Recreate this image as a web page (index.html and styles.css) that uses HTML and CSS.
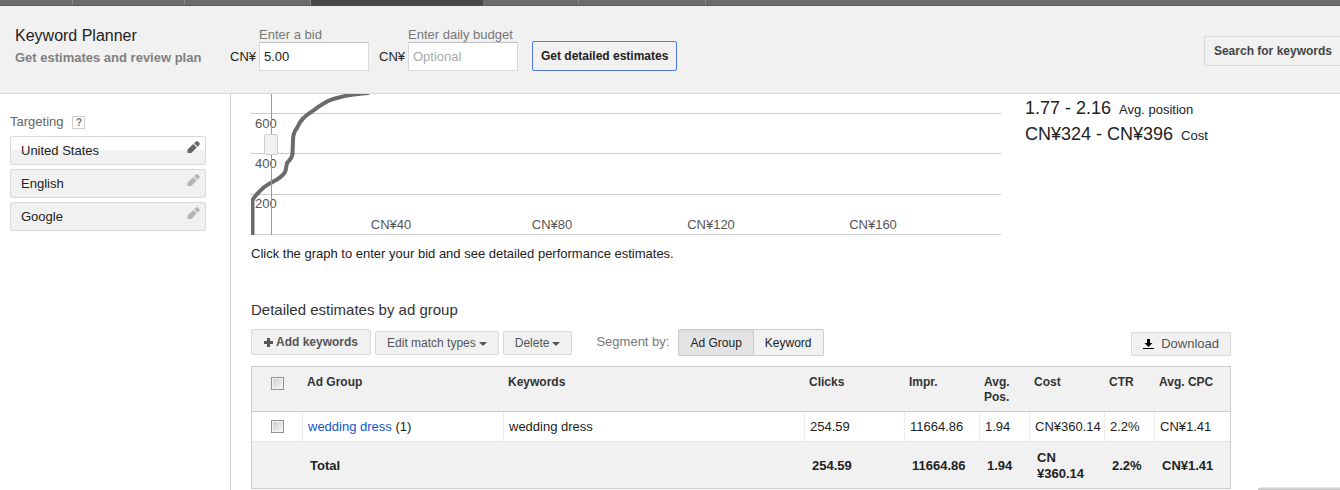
FILE: index.html
```html
<!DOCTYPE html>
<html lang="en">
<head>
<meta charset="utf-8">
<title>Keyword Planner</title>
<link rel="stylesheet" href="styles.css">
</head>
<body>
<svg class="defs" aria-hidden="true">
  <symbol id="pencil" viewBox="0 0 13 13"><path d="M0.500 8.500 L6.300 3 L9.800 6.500 L4.300 12 H0.500 Z M7.200 2.200 L9.200 0.200 H10.700 L12.700 2.200 V3.500 L10.700 5.700 Z"/></symbol>
</svg>
<nav class="tabs" aria-label="Sections">
  <span class="tab tab-first"></span><span class="tab tab-second"></span><span class="tab tab-third"></span><span class="tab tab-active"></span><span class="tab tab-fifth"></span><span class="tab tab-sixth"></span>
</nav>
<header class="header">
  <div class="title">
    <h1>Keyword Planner</h1>
    <p>Get estimates and review plan</p>
  </div>
  <form class="bid-form">
    <div class="field">
      <label for="bid">Enter a bid</label>
      <span class="currency">CN¥</span>
      <input id="bid" type="text" value="5.00">
    </div>
    <div class="field">
      <label for="budget">Enter daily budget</label>
      <span class="currency">CN¥</span>
      <input id="budget" type="text" placeholder="Optional">
    </div>
    <button class="primary" type="button">Get detailed estimates</button>
  </form>
  <button class="search" type="button">Search for keywords</button>
</header>
<div class="page">
  <aside class="sidebar">
    <div class="targeting"><h2>Targeting</h2><button class="help" type="button" aria-label="Help on targeting">?</button></div>
    <button class="target target-hover" type="button">United States<svg class="pencil"><use href="#pencil"/></svg></button>
    <button class="target" type="button">English<svg class="pencil"><use href="#pencil"/></svg></button>
    <button class="target" type="button">Google<svg class="pencil"><use href="#pencil"/></svg></button>
  </aside>
  <main class="main">
    <section class="overview">
      <svg class="chart" viewBox="0 0 750 141" role="img" aria-label="Clicks by bid">
        <g class="grid"><path d="M0 19.5H750M0 59.5H750M0 100.5H750M0 140.5H750"/></g>
        <g class="axis">
          <text x="4" y="34">600</text><text x="4" y="74">400</text><text x="4" y="114">200</text>
          <g text-anchor="middle"><text x="140" y="135">CN¥40</text><text x="301" y="135">CN¥80</text><text x="460" y="135">CN¥120</text><text x="622" y="135">CN¥160</text></g>
        </g>
        <path class="curve" d="M1.5 141V107Q2 104 7 99Q12 93 17 90.5L26 85.5Q33 81 34.500 77L36 69Q41 64 41.500 60L42 46Q42 39 46 34Q50 24 61 17.500Q68 12 76 7.500Q90 1 118 -1"/>
        <path class="marker" d="M20.500 0V141"/>
        <rect class="handle" x="13.500" y="40.500" width="13" height="20" rx="1.500"/>
      </svg>
      <dl class="stats">
        <div><dd>1.77 - 2.16</dd><dt>Avg. position</dt></div>
        <div><dd>CN¥324 - CN¥396</dd><dt>Cost</dt></div>
      </dl>
    </section>
    <p class="hint">Click the graph to enter your bid and see detailed performance estimates.</p>
    <h2 class="section-title">Detailed estimates by ad group</h2>
    <div class="toolbar">
      <button class="tool tool-add" type="button"><svg class="plus" viewBox="0 0 9 9"><path d="M3 0H6V3H9V6H6V9H3V6H0V3H3Z"/></svg>Add keywords</button>
      <button class="tool" type="button">Edit match types<span class="caret"></span></button>
      <button class="tool" type="button">Delete<span class="caret"></span></button>
      <span class="segment-label">Segment by:</span>
      <div class="segment"><button class="selected" type="button" aria-pressed="true">Ad Group</button><button type="button" aria-pressed="false">Keyword</button></div>
      <button class="tool tool-download" type="button"><svg class="down" viewBox="0 0 11 11"><path d="M4 0H7V4H9.500L5.500 8L1.500 4H4ZM0 9H11V10H0Z"/></svg>Download</button>
    </div>
    <table class="estimates">
      <colgroup><col class="c-check"><col class="c-group"><col><col class="c-clicks"><col class="c-wide"><col class="c-narrow"><col class="c-wide"><col class="c-narrow"><col class="c-last"></colgroup>
      <thead>
        <tr><th class="check"><input type="checkbox" aria-label="Select all"></th><th>Ad Group</th><th>Keywords</th><th>Clicks</th><th>Impr.</th><th>Avg. Pos.</th><th>Cost</th><th>CTR</th><th>Avg. CPC</th></tr>
      </thead>
      <tbody>
        <tr><td class="check"><input type="checkbox" aria-label="Select wedding dress"></td><td><a href="#">wedding dress</a> (1)</td><td>wedding dress</td><td>254.59</td><td>11664.86</td><td>1.94</td><td>CN¥360.14</td><td>2.2%</td><td>CN¥1.41</td></tr>
      </tbody>
      <tfoot>
        <tr><td></td><td>Total</td><td></td><td>254.59</td><td>11664.86</td><td>1.94</td><td>CN<br>¥360.14</td><td>2.2%</td><td>CN¥1.41</td></tr>
      </tfoot>
    </table>
  </main>
</div>
<div class="dock"></div>
</body>
</html>
```
FILE: styles.css
```css
* { box-sizing: border-box; }
body { margin: 0; background: #fff; color: #222; font: 13px/16px "Liberation Sans", Arial, sans-serif; overflow: hidden; }
h1, h2, p, dl, dd, dt { margin: 0; font-weight: normal; }
button, input { font: inherit; color: inherit; margin: 0; }
button { cursor: pointer; border-radius: 2px; }
.defs { display: none; }

.tabs { display: flex; height: 6px; background: #6b6b6b; border-bottom: 1px solid #5c5c5c; }
.tab { border-right: 1px solid #8a8a8a; }
.tab-first { width: 73px; }
.tab-second { width: 112px; }
.tab-third { width: 126px; }
.tab-active { width: 172px; height: 6px; background: #484848; border-right: 0; }
.tab-fifth { width: 96px; }
.tab-sixth { width: 127px; }

.header { display: flex; align-items: flex-start; height: 88px; padding-left: 15px; background: #f1f1f1; border-bottom: 1px solid #d9d9d9; }
.title { width: 215px; padding-top: 20px; }
h1 { font-size: 16px; line-height: 20px; }
.title p { color: #808080; font-size: 13px; font-weight: bold; line-height: 16px; padding-top: 4px; }
.bid-form { display: flex; align-items: flex-end; gap: 10px; padding-top: 21px; }
.field { display: grid; grid-template-columns: 29px 110px; align-items: center; }
.field label { grid-column: 2; color: #777; line-height: 15px; }
.field input { width: 110px; height: 29px; padding: 0 4px; background: #fff; border: 1px solid #d9d9d9; border-top-color: #c0c0c0; }
.field input::placeholder { color: #aaa; }
.primary { height: 30px; margin-left: 4px; padding: 0 8px; background: #f1f1f1; border: 1px solid #4d78f0; font-weight: bold; font-size: 12px; }
.search { height: 30px; margin: 30px 0 0 auto; padding: 0 8px 0 9px; background: #f1f1f1; border: 1px solid #d9d9d9; border-right: 0; border-radius: 2px 0 0 2px; color: #444; font-size: 12px; font-weight: bold; }

.page { display: flex; min-height: 396px; }
.sidebar { flex: none; width: 231px; padding: 20px 24px 0 10px; border-right: 1px solid #ccc; }
.targeting { display: flex; align-items: center; gap: 9px; height: 16px; margin-bottom: 6px; }
.targeting h2 { font-size: 13px; color: #666; }
.help { width: 13px; height: 13px; padding: 0; background: #fff; border: 1px solid #ccc; border-radius: 0; color: #777; font-size: 10px; line-height: 11px; font-weight: bold; }
.target { display: flex; justify-content: space-between; width: 100%; height: 29px; margin-bottom: 4px; padding: 6px 5px 0 10px; background: #f1f1f1; border: 1px solid #d9d9d9; text-align: left; line-height: 16px; }
.target-hover { background: linear-gradient(#fff 13px, #f1f1f1 13px); }
.pencil { width: 13px; height: 13px; margin-top: -2px; fill: #b5b5b5; }
.target-hover .pencil { fill: #666; }

.main { flex: 1; min-width: 0; padding: 0 109px 0 20px; }
.overview { display: grid; grid-template-columns: 750fr 206fr; column-gap: 24px; }
.chart { display: block; width: 100%; }
.chart path { fill: none; }
.grid path { stroke: #ccc; }
.axis { fill: #555; font-size: 13px; }
.chart .curve { stroke: #6b6b6b; stroke-width: 4; stroke-linejoin: round; }
.chart .marker { stroke: #999; }
.handle { fill: #f1f1f1; stroke: #ccc; }
.stats div { display: flex; align-items: baseline; gap: 8px; height: 26px; line-height: 28px; white-space: nowrap; }
.stats dd { font-size: 18px; }
.hint { padding-top: 11px; }
.section-title { margin-top: 38px; font-size: 15px; line-height: 20px; color: #333; }

.toolbar { display: flex; align-items: flex-end; gap: 4px; height: 27px; margin: 9px 0 10px; color: #555; }
.tool { display: flex; align-items: center; height: 24px; padding: 0 11px; background: #f1f1f1; border: 1px solid #d9d9d9; white-space: nowrap; font-size: 12px; }
.tool-add { height: 26px; padding: 0 12px; font-weight: bold; margin-bottom: 1px; }
.tool-add ~ .tool { margin-bottom: 1px; }
.plus { flex: none; width: 9px; height: 9px; margin-right: 3px; fill: #555; }
.caret { margin: 2px 0 0 3px; border: 4px solid transparent; border-top-color: #555; border-bottom: 0; }
.segment-label { margin-left: 20px; padding-bottom: 6px; color: #777; }
.segment { display: flex; margin-left: 5px; }
.segment button { height: 27px; padding: 0 11px; background: #f1f1f1; border: 1px solid #ccc; border-left: 0; border-radius: 0 2px 2px 0; color: #222; font-size: 12px; }
.segment .selected { background: #e4e4e4; border-left: 1px solid #ccc; border-radius: 2px 0 0 2px; box-shadow: inset 0 2px 2px #d9d9d9; }
.toolbar .tool-download { margin: 0 0 0 auto; font-size: 13px; }
.down { flex: none; width: 11px; height: 11px; margin-right: 7px; fill: #000; }

.estimates { width: 100%; table-layout: fixed; border-collapse: separate; border-spacing: 0; border: 1px solid #ccc; }
.c-check { width: 50px; }
.c-group { width: 201px; }
.c-clicks { width: 100px; }
.c-wide { width: 75px; }
.c-narrow { width: 50px; }
.c-last { width: 76px; }
.estimates th, .estimates td { text-align: left; white-space: nowrap; }
.estimates th { height: 45px; padding: 8px 4px 6px 5px; background: #f1f1f1; border-bottom: 1px solid #ccc; font-size: 12px; line-height: 15px; vertical-align: top; white-space: normal; color: #333; }
.estimates tbody td { height: 30px; padding: 0 4px 0 5px; border-left: 1px solid #ececec; border-bottom: 1px solid #e5e5e5; }
.estimates .check { padding: 0; border-left: 0; text-align: center; vertical-align: middle; }
.estimates th.check { padding-top: 10px; vertical-align: top; }
.estimates tfoot td { height: 46px; padding: 2px 4px 0 8px; background: #f1f1f1; font-weight: bold; }
.estimates a { color: #15c; text-decoration: none; }
.estimates input { appearance: none; display: block; width: 13px; height: 13px; margin: 0 auto; background: linear-gradient(135deg, #ccc, #f6f6f6); border: 1px solid #8e8f8f; box-shadow: inset 0 0 0 1px #f4f4f4; }
.dock { position: fixed; right: 0; bottom: 0; width: 82px; height: 3px; background: linear-gradient(#eee, #bbb); border-radius: 3px 0 0 0; }
```
